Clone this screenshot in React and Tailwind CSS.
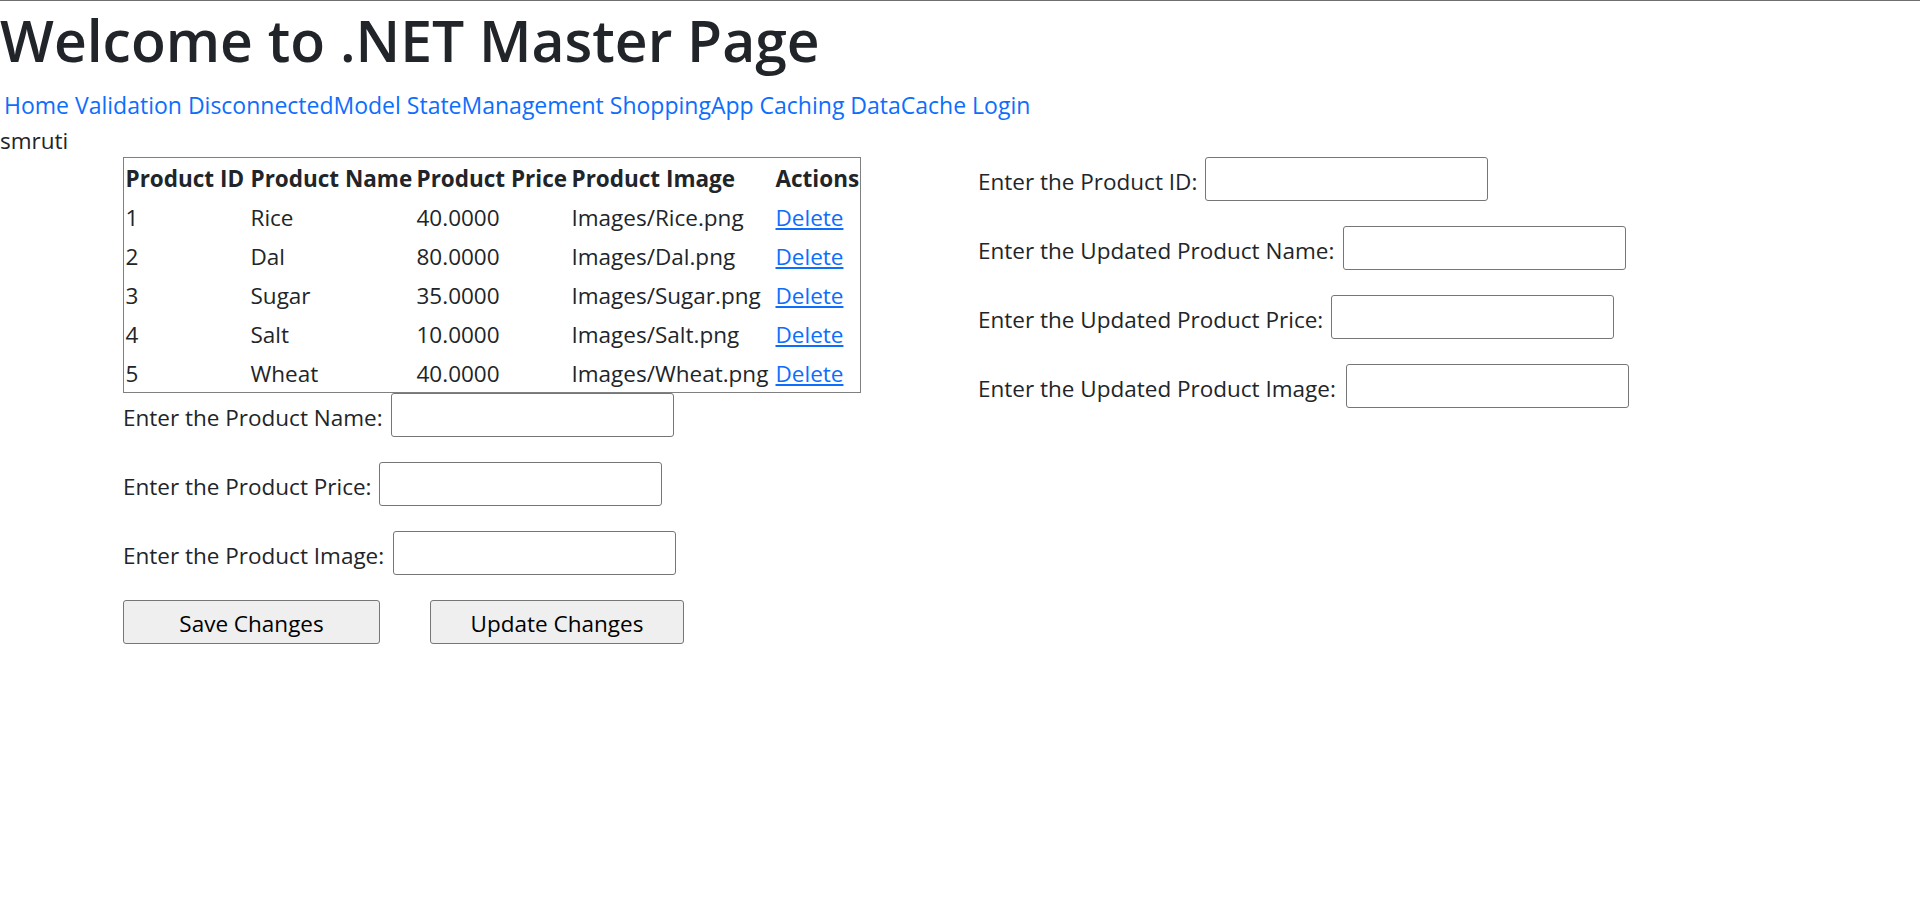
import React from 'react';

const products = [
    ['1', 'Rice', '40.0000', 'Images/Rice.png'],
    ['2', 'Dal', '80.0000', 'Images/Dal.png'],
    ['3', 'Sugar', '35.0000', 'Images/Sugar.png'],
    ['4', 'Salt', '10.0000', 'Images/Salt.png'],
    ['5', 'Wheat', '40.0000', 'Images/Wheat.png']
];

const navLinks = ['Home', 'Validation', 'DisconnectedModel', 'StateManagement', 'ShoppingApp', 'Caching', 'DataCache', 'Login'];

const FieldRow = ({ label, labelWidth }) => (
    <div className="flex items-center h-[44px] mb-[25px]">
        <span className={`${labelWidth} shrink-0 whitespace-nowrap pt-[5px]`}>{label}</span>
        <input type="text" className="w-[283px] h-[44px] shrink-0 border border-[#767676] rounded-[3px] bg-white px-[3px] outline-none" />
    </div>
);

const App = () => {
    return (
        <div className="min-h-screen bg-white border-t border-[#6f6f6f] font-['Open_Sans',sans-serif] text-[22.5px] leading-[36px] text-[#212529]">
            <h1 className="h-[72px] pt-[3px] text-[57px] leading-[72px] font-semibold mb-[12px] whitespace-nowrap">Welcome to .NET Master Page</h1>

            <nav className="h-[36px] pt-[2px] pl-[4px] text-[23px] text-[#0d6efd] whitespace-nowrap">
                {navLinks.map((link, i) => (
                    <React.Fragment key={link}>
                        {i > 0 && ' '}
                        <a href="#" className="no-underline">{link}</a>
                    </React.Fragment>
                ))}
            </nav>

            <div className="h-[36px] pt-[2px]">smruti</div>

            <div className="flex items-start">
                <div className="ml-[123px] w-[738px] shrink-0">
                    <table className="table-fixed border-separate border-spacing-0 border border-[#808080] w-[738px]">
                        <colgroup>
                            <col className="w-[125px]" />
                            <col className="w-[166px]" />
                            <col className="w-[155px]" />
                            <col className="w-[204px]" />
                            <col className="w-[86px]" />
                        </colgroup>
                        <thead>
                            <tr>
                                <th className="h-[39px] p-0 pt-[3px] pl-[1.5px] text-left font-bold whitespace-nowrap">Product ID</th>
                                <th className="h-[39px] p-0 pt-[3px] pl-[1.5px] text-left font-bold whitespace-nowrap">Product Name</th>
                                <th className="h-[39px] p-0 pt-[3px] pl-[1.5px] text-left font-bold whitespace-nowrap">Product Price</th>
                                <th className="h-[39px] p-0 pt-[3px] pl-[1.5px] text-left font-bold whitespace-nowrap">Product Image</th>
                                <th className="h-[39px] p-0 pt-[3px] pl-[1.5px] text-left font-bold whitespace-nowrap">Actions</th>
                            </tr>
                        </thead>
                        <tbody>
                            {products.map((p) => (
                                <tr key={p[0]}>
                                    <td className="h-[39px] p-0 pt-[3px] pl-[1.5px] whitespace-nowrap">{p[0]}</td>
                                    <td className="h-[39px] p-0 pt-[3px] pl-[1.5px] whitespace-nowrap">{p[1]}</td>
                                    <td className="h-[39px] p-0 pt-[3px] pl-[1.5px] whitespace-nowrap">{p[2]}</td>
                                    <td className="h-[39px] p-0 pt-[3px] pl-[1.5px] whitespace-nowrap">{p[3]}</td>
                                    <td className="h-[39px] p-0 pt-[3px] pl-[1.5px] whitespace-nowrap">
                                        <a href="#" className="text-[#0d6efd] underline">Delete</a>
                                    </td>
                                </tr>
                            ))}
                        </tbody>
                    </table>

                    <FieldRow label="Enter the Product Name: " labelWidth="w-[268px]" />
                    <FieldRow label="Enter the Product Price: " labelWidth="w-[256px]" />
                    <FieldRow label="Enter the Product Image: " labelWidth="w-[270px]" />

                    <div className="flex">
                        <button className="w-[257px] h-[44px] bg-[#efefef] border border-[#767676] rounded-[3px] text-black pt-[4px]">Save Changes</button>
                        <button className="ml-[50px] w-[254px] h-[44px] bg-[#efefef] border border-[#767676] rounded-[3px] text-black pt-[4px]">Update Changes</button>
                    </div>
                </div>

                <div className="ml-[117px]">
                    <FieldRow label="Enter the Product ID: " labelWidth="w-[227px]" />
                    <FieldRow label="Enter the Updated Product Name: " labelWidth="w-[365px]" />
                    <FieldRow label="Enter the Updated Product Price: " labelWidth="w-[353px]" />
                    <FieldRow label="Enter the Updated Product Image: " labelWidth="w-[368px]" />
                </div>
            </div>
        </div>
    );
};

export default App;
